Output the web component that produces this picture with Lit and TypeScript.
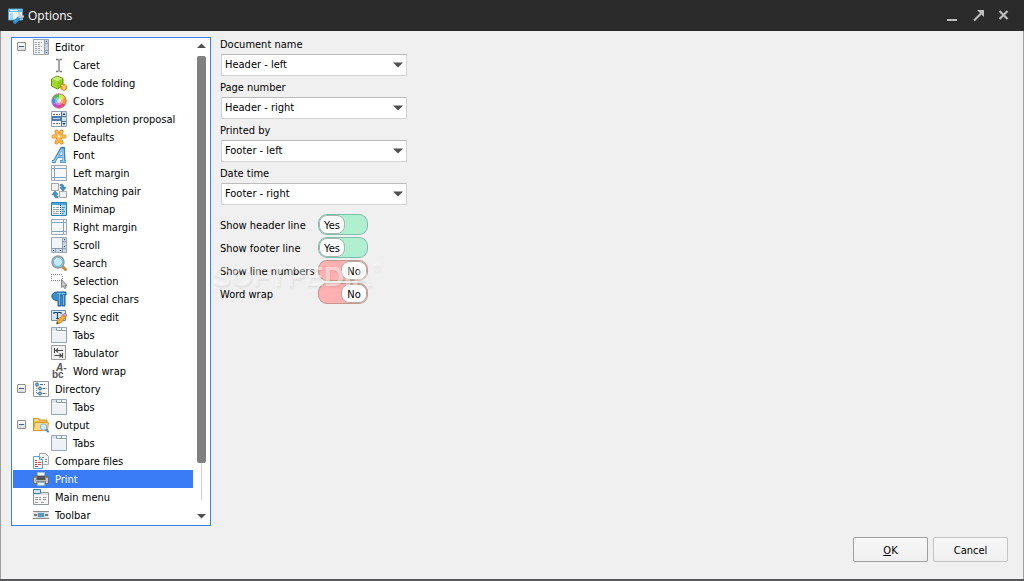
import { LitElement, html, svg, css, nothing, TemplateResult, SVGTemplateResult } from "lit";
import { customElement, state } from "lit/decorators.js";
import { classMap } from "lit/directives/class-map.js";

interface TreeNode {
  label: string;
  icon: string;
  children?: TreeNode[];
}

const tabsIcon = svg`
  <path d="M.5 .5h15v15H.5z" fill="#eef2f7" stroke="#95a4b6"/>
  <path d="M1 1h14v3H1z" fill="#dbe4ee"/>
  <path d="M5.500 1v2.500h5V1M10.500 3.500H15" fill="none" stroke="#8799ad"/>
  <path d="M6 1h4v2H6zM11 1h4v2h-4z" fill="#f7fafd"/>
  <path d="M1 4.500h14" stroke="#fff"/>`;

const icons: Record<string, SVGTemplateResult> = {
  app: svg`
    <path d="M.500 1h14v11H.5z" fill="#e6f4fc" stroke="#4aa3d8"/>
    <path d="M1 1.500h13v2.500H1z" fill="#5fb6e6"/><path d="M2 2h8v1H2z" fill="#fff"/>
    <path d="M2 5h3v6H2z" fill="#a9d8f2"/>
    <path d="M7 14l4-4" stroke="#2f94d4" stroke-width="3.500" stroke-linecap="round"/>
    <path d="M10.500 9.500l3-2M11.500 4v3l2 1.500h3" stroke="#c9ced2" stroke-width="2" fill="none"/>
    <path d="M13 9l1.500 3" stroke="#a8adb2" stroke-width="1.500"/>`,
  editor: svg`
    <path d="M.5.5h15v15H.5z" fill="#f4f5f6" stroke="#9aa5b0"/>
    <path d="M11 1h4v14h-4z" fill="#c5d3e0"/>
    <path d="M11.500 1v14M11 4.500h4M11 11.500h4" stroke="#8fa1b3"/>
    <path d="M12.500 3l1-1 1 1zM12.500 13l1 1 1-1z" fill="#34495e"/>
    <path d="M2 3.500h7M2 5.500h6M2 7.500h7M2 9.500h6M2 11.500h7M2 13.500h5" stroke="#a0a5aa" stroke-dasharray="2 1"/>`,
  caret: svg`<path d="M5 2.500h2.500M8.500 2.500H11M8 3v11M5 14.500h2.500M8.500 14.500H11" stroke="#777" stroke-width="1.300" fill="none"/>`,
  folding: svg`
    <path d="M.5 4L6 1l6 2.500v7L6.500 14 .5 11z" fill="#8cc91a" stroke="#5c9410"/>
    <path d="M1 4l5-2.500 5.500 2.200L6.500 6.500z" fill="#c8ec72"/>
    <path d="M6.500 6.500V13.500L1 11V4.200z" fill="#a3d832"/>
    <path d="M10 10l3-1 2.500 1.500v3.500L13 15.500 10 14z" fill="#f7ac32" stroke="#d98916"/>
    <path d="M10.500 10.500l2.500 1 2.500-1M13 11.500V15" stroke="#ffe0a0" fill="none"/>`,
  colors: svg`
    <path d="M8 8V1A7 7 0 0 1 14 4.500z" fill="#d8e43a"/><path d="M8 8l6-3.500A7 7 0 0 1 14 11.500z" fill="#f29a2c"/>
    <path d="M8 8l6 3.500A7 7 0 0 1 8 15z" fill="#f0436b"/><path d="M8 8v7A7 7 0 0 1 2 11.500z" fill="#b44de8"/>
    <path d="M8 8l-6 3.500A7 7 0 0 1 2 4.500z" fill="#3d8ff0"/><path d="M8 8L2 4.500A7 7 0 0 1 8 1z" fill="#3fc36b"/>
    <circle cx="8" cy="8" r="4" fill="#fff" opacity=".35"/><circle cx="8" cy="8" r="2" fill="#fff" opacity=".6"/>
    <circle cx="8" cy="8" r="7.200" fill="none" stroke="#c0504e" stroke-width=".8"/>`,
  completion: svg`
    <path d="M.5.5h15v15H.5z" fill="#fff" stroke="#8b9fb3"/>
    <path d="M1 5h9v5H1z" fill="#4d7ba8"/><path d="M2 7.500h7" stroke="#bcd6ee"/>
    <path d="M2 3.500h7M2 12.500h7" stroke="#666" stroke-dasharray="2 1"/>
    <path d="M10 1h5v14h-5z" fill="#cfdfee"/><path d="M10.500 1v14M10 5.500h5M10 10.500h5" stroke="#4f7598"/>
    <path d="M11.500 4L13 2l1.500 2zM11.500 12l1.500 2 1.500-2z" fill="#1f3f5f"/>`,
  defaults: svg`
    <g stroke="#dd8e28" stroke-width="4" stroke-linecap="round"><path d="M5.500 2.500l5 11M10.500 2.500l-5 11M2.500 7.500h11"/></g>
    <g stroke="#fcbb52" stroke-width="2.400" stroke-linecap="round"><path d="M5.500 2.500l5 11M10.500 2.500l-5 11M2.500 7.500h11"/></g>
    <circle cx="8" cy="7.500" r="1.200" fill="#fff0d0"/>`,
  font: svg`
    <path d="M1 14.500h4M9 14.500h6M3.500 14L10.500 1.500h2L13 14M6 9.500h6" fill="none" stroke="#3d82bd" stroke-width="3"/>
    <path d="M1.500 14.500h3M9.500 14.500h5M3.500 14L10.500 2.500h1.500L12.500 14M6 9.500h6" fill="none" stroke="#9ccff4" stroke-width="1.400"/>`,
  leftMargin: svg`
    <path d="M.5.5h15v15H.5z" fill="#f7f8f9" stroke="#a2abb3"/>
    <path d="M3.500 1v14M1 3.500h14M1 12.500h14" stroke="#7ea6c4"/>`,
  matching: svg`
    <path d="M.5.5h7v7h-7zM8.500 8.500h7v6h-7z" fill="#f2f2f2" stroke="#a6a6a6"/>
    <path d="M9 1.500c3-1 4 1 4 3h2L12 8 9 4.500h2c0-1-.5-2-2-1.500z" fill="#3c94cf" stroke="#286b9c" stroke-width=".6"/>
    <path d="M7 14.500c-3 1-4-1-4-3H1L4 8l3 3.500H5c0 1 .5 2 2 1.500z" fill="#3c94cf" stroke="#286b9c" stroke-width=".6"/>`,
  minimap: svg`
    <path d="M.5 1.500h15v13H.5z" fill="#fff" stroke="#2783b8"/><path d="M1 2h14v2H1z" fill="#4ba5d8"/>
    <path d="M10 4h5v10h-5z" fill="#a9dcf6"/><path d="M9.500 4v10" stroke="#345" stroke-dasharray="1 1"/>
    <path d="M2 6.500h2M5 6.500h3M2 8.500h6M2 10.500h2M5 10.500h3M2 12.500h6" stroke="#9ba3aa"/>
    <path d="M11 6.500h3M11 8.500h2M11 10.500h3M11 12.500h2" stroke="#4d91b8"/>`,
  rightMargin: svg`
    <path d="M.5.5h15v15H.5z" fill="#f7f8f9" stroke="#a2abb3"/>
    <path d="M12.500 1v14M1 3.500h14M1 12.500h14" stroke="#7ea6c4"/>`,
  scroll: svg`
    <path d="M.5.5h15v15H.5z" fill="#f2f4f6" stroke="#9aa8b5"/>
    <path d="M11 1h4v14H1v-4h10z" fill="#c8d6e3"/>
    <path d="M11.500 1v14M1 11.500h14M11 4.500h4M4.500 11v4" stroke="#8da0b3"/>
    <path d="M13 2h1v1h-1zM13 9h1v1h-1zM2 13h1v1H2zM9 13h1v1H9z" fill="#34495e"/>`,
  search: svg`
    <path d="M12 12l2.500 2.500" stroke="#c58a34" stroke-width="3" stroke-linecap="round"/>
    <circle cx="7" cy="7" r="6" fill="#a5dbf7" stroke="#8c9aa6" stroke-width="1.500"/>
    <circle cx="7" cy="7" r="4.500" fill="#c4ebfd" stroke="#68b5e2"/><path d="M4 6c.5-2 2-3 4-2.500" stroke="#fff" fill="none"/>`,
  selection: svg`
    <path d="M0 1.500h12M0 7.500h10" stroke="#777" stroke-dasharray="1 1"/>
    <path d="M.5 3v4M11.500 3v3" stroke="#777" stroke-dasharray="1 1"/>
    <path d="M10.500 6.500v8l2-1.500 1 2.500 1.500-.7-1-2.300h2z" fill="#c9c9c9" stroke="#858585"/>`,
  special: svg`
    <path d="M15 1v3h-1v11h-3V4h-1v11H7V9.500C-1 10-1 1 6 1z" fill="#3a8fcd" stroke="#1d619a"/>
    <path d="M6 2.500h8M12.500 4v10M8.500 3v11" stroke="#78bce9" fill="none"/>`,
  sync: svg`
    <path d="M.5 1.500h14v10H.5z" fill="#d8e7f5" stroke="#6f8fb0"/>
    <path d="M3 5V3.500h7V5M6.500 3.500v6M5 9.500h3" fill="none" stroke="#24486d" stroke-width="1.200"/>
    <path d="M5.500 15l1-4L12 5.500l3 3L9.500 14z" fill="#f5aa38" stroke="#b8761e" stroke-width=".8"/>
    <path d="M12 5.500l1-1c1.500-.5 3 1 2.500 2.500l-.8 1z" fill="#e9a3c4" stroke="#a0638a" stroke-width=".7"/>
    <path d="M5.500 15l.7-2 1.500 1.300z" fill="#333"/>`,
  tabs: tabsIcon,
  tabulator: svg`
    <path d="M.5 .5h14v14H.5z" fill="#f1f1f1" stroke="#9c9c9c"/>
    <path d="M3.500 3v5M4 5.500h8M7 3.500L5 5.500l2 2M11.500 8v5M3.500 10.500H11M8.500 8.500l2 2-2 2" stroke="#4a4a4a" fill="none" stroke-width="1.100"/>`,
  wrap: svg`
    <text x="5" y="8" font-size="10" font-weight="700" font-style="italic" font-family="Liberation Sans, sans-serif" fill="#555">A-</text>
    <text x="1" y="15" font-size="10" font-weight="700" font-family="Liberation Sans, sans-serif" fill="#555">bc</text>`,
  directory: svg`
    <path d="M.5.5h15v15H.5z" fill="#fafafa" stroke="#8f979f"/>
    <path d="M3.500 3v9.500H6M3.500 7.500H6" stroke="#888" fill="none" stroke-dasharray="1 1"/>
    <circle cx="4" cy="3.500" r="1.500" fill="#79bce5" stroke="#2b6d9e"/>
    <circle cx="7" cy="7.500" r="1.500" fill="#79bce5" stroke="#2b6d9e"/>
    <circle cx="7" cy="12.500" r="1.500" fill="#79bce5" stroke="#2b6d9e"/>
    <path d="M7 3.500h5M9.500 7.500H14M9.500 12.500H14" stroke="#666" stroke-dasharray="3 1"/>`,
  output: svg`
    <path d="M.5 1.500h5l1 1.500h7.500v10.500H.5z" fill="#f3bd53" stroke="#d19527"/>
    <path d="M2 5.500h13.500l-1 8H.5z" fill="#fcd987" stroke="#d89d33"/>
    <path d="M2 3h3" stroke="#fff"/>
    <path d="M13 12.500l2 2" stroke="#4d8ec4" stroke-width="2" stroke-linecap="round"/>
    <circle cx="10.500" cy="10" r="3.200" fill="#cfeafa" stroke="#82b4d6"/>`,
  compare: svg`
    <path d="M6.500.5h6l3 3v8h-9z" fill="#f6f6f6" stroke="#aaa"/>
    <path d="M9 4.500h2M12 6.500h2M12 8.500h2" stroke="#888"/>
    <path d="M.5 3.500h6l3 3v9h-9z" fill="#fff" stroke="#5aa5d6"/><path d="M6.500 3.500v3h3" fill="#cde7f7" stroke="#5aa5d6"/>
    <path d="M2 7.500h2M2 9.500h2M5 9.500h3M2 11.500h2M5 11.500h3M2 13.500h3" stroke="#e03b3b"/>`,
  print: svg`
    <path d="M4.500 1.500h7v5h-7z" fill="#edf9ff" stroke="#9dc0d4"/>
    <path d="M.5 6.500l1-1.500h13l1 1.500v6H.5z" fill="#8a8a8a" stroke="#6a6a6a"/>
    <path d="M1 7h2v5H1zM13 7h2v5h-2z" fill="#c9c9c9"/>
    <path d="M4 5h8v4H4z" fill="#555"/><path d="M2 9.500h12" stroke="#bbb"/>
    <path d="M4.500 11.500h7v3h-7z" fill="#dff5ff" stroke="#8fb8cd"/>`,
  menu: svg`
    <path d="M.5 3.500h15v12H.5z" fill="#f8f8f8" stroke="#8d969f"/><path d="M1 4h14v2H1z" fill="#dde4ea"/>
    <path d="M.5.5h7v4h-7z" fill="#cfe5f7" stroke="#4c78a6"/>
    <path d="M2 8.500h6M2 10.500h6M2 13.500h4M10 8.500h4M10 10.500h3M8 13.500h4" stroke="#9a9a9a" stroke-dasharray="3 1"/>`,
  toolbar: svg`
    <path d="M0 4h16v8H0z" fill="#e4e4e4"/>
    <path d="M4 4h8v8H4z" fill="#cbd9e4"/>
    <path d="M0 4.500h16M0 11.500h16" stroke="#8a8a8a"/>
    <path d="M1 8h3M12 8h3" stroke="#555" stroke-width="1.500"/><path d="M5 6h6v4H5z" fill="#5b96c2"/>`,
};

const tree: TreeNode[] = [
  {
    label: "Editor", icon: "editor", children: [
      { label: "Caret", icon: "caret" },
      { label: "Code folding", icon: "folding" },
      { label: "Colors", icon: "colors" },
      { label: "Completion proposal", icon: "completion" },
      { label: "Defaults", icon: "defaults" },
      { label: "Font", icon: "font" },
      { label: "Left margin", icon: "leftMargin" },
      { label: "Matching pair", icon: "matching" },
      { label: "Minimap", icon: "minimap" },
      { label: "Right margin", icon: "rightMargin" },
      { label: "Scroll", icon: "scroll" },
      { label: "Search", icon: "search" },
      { label: "Selection", icon: "selection" },
      { label: "Special chars", icon: "special" },
      { label: "Sync edit", icon: "sync" },
      { label: "Tabs", icon: "tabs" },
      { label: "Tabulator", icon: "tabulator" },
      { label: "Word wrap", icon: "wrap" },
    ],
  },
  { label: "Directory", icon: "directory", children: [{ label: "Tabs", icon: "tabs" }] },
  { label: "Output", icon: "output", children: [{ label: "Tabs", icon: "tabs" }] },
  { label: "Compare files", icon: "compare" },
  { label: "Print", icon: "print" },
  { label: "Main menu", icon: "menu" },
  { label: "Toolbar", icon: "toolbar" },
];

const positions = ["Header - left", "Header - right", "Footer - left", "Footer - right"];
const fields = ["Document name", "Page number", "Printed by", "Date time"];

const icon = (name: string) =>
  html`<svg class="icon" viewBox="0 0 16 16" fill="none" aria-hidden="true">${icons[name]}</svg>`;

@customElement("options-tree")
export class OptionsTree extends LitElement {
  @state() private selected = "Print";
  @state() private closed: string[] = [];

  static styles = css`
    :host {
      display: flex;
      box-sizing: border-box;
      min-height: 0;
      padding: 0 4px 0 1px;
      background: #fff;
      border: 1px solid #3b7ff5;
      overflow: hidden;
    }
    ul { margin: 0; padding: 0; list-style: none; }
    .list { flex: 1; min-width: 0; overflow: hidden; }
    .row { display: flex; align-items: center; height: 18px; padding-left: 20px; }
    .row.branch { padding-left: 4px; }
    .row.child { padding-left: 38px; }
    .row.selected { background: #3a7cf6; color: #fff; }
    .icon { flex: none; width: 16px; height: 16px; }
    .item {
      flex: 1;
      padding: 2px 0 0 6px;
      border: 0;
      background: none;
      color: inherit;
      font: inherit;
      text-align: left;
      white-space: nowrap;
      outline: none;
    }
    .toggle {
      flex: none;
      display: flex;
      width: 9px;
      height: 9px;
      margin: 0 7px 1px 0;
      padding: 0;
      border: 1px solid #8e8f8f;
      border-radius: 1px;
      background: linear-gradient(#fff, #dcdcdc);
    }
    .sign { width: 7px; height: 7px; }
    .bar { flex: none; display: flex; flex-direction: column; align-items: center; width: 9px; margin-left: 4px; }
    .arrow { display: flex; flex: none; width: 9px; height: 18px; padding: 0; border: 0; background: none; }
    .arrow svg { width: 9px; height: 18px; }
    .track { flex: 1; display: flex; flex-direction: column; align-items: center; width: 9px; margin-bottom: 7px; }
    .thumb { flex: 11; width: 9px; border-radius: 2px; background: #808080; }
    .rest { flex: 1; width: 1px; background: #d0d0d0; }
  `;

  private flip(label: string) {
    this.closed = this.closed.includes(label)
      ? this.closed.filter((l) => l !== label)
      : [...this.closed, label];
  }

  private node(n: TreeNode, parent = ""): TemplateResult {
    const key = parent + n.label;
    const open = !this.closed.includes(key);
    const on = this.selected === key;
    return html`<li role="treeitem" aria-selected=${on}>
      <div class=${classMap({ row: true, branch: !!n.children, child: !!parent, selected: on })}>
        ${n.children
          ? html`<button class="toggle" aria-label="Toggle ${n.label}" @click=${() => this.flip(key)}>
              <svg class="sign" viewBox="0 0 7 7"><path d=${open ? "M1 3.5h5" : "M1 3.5h5M3.5 1v5"} stroke="#3b5fb5" /></svg>
            </button>`
          : nothing}
        ${icon(n.icon)}
        <button class="item" @click=${() => (this.selected = key)}>${n.label}</button>
      </div>
      ${n.children && open
        ? html`<ul role="group">${n.children.map((c) => this.node(c, key + "/"))}</ul>`
        : nothing}
    </li>`;
  }

  render() {
    return html`
      <ul class="list" role="tree">${tree.map((n) => this.node(n))}</ul>
      <div class="bar">
        <button class="arrow" aria-label="Scroll up"><svg viewBox="0 0 9 18"><path d="M0 10l4.500-4.500L9 10z" fill="#505050" /></svg></button>
        <div class="track"><div class="thumb"></div><div class="rest"></div></div>
        <button class="arrow" aria-label="Scroll down"><svg viewBox="0 0 9 18"><path d="M0 7l4.500 4.500L9 7z" fill="#505050" /></svg></button>
      </div>`;
  }
}

@customElement("app-root")
export class AppRoot extends LitElement {
  @state() private switches = [
    { label: "Show header line", on: true },
    { label: "Show footer line", on: true },
    { label: "Show line numbers", on: false },
    { label: "Word wrap", on: false },
  ];

  static styles = css`
    :host {
      display: flex;
      flex-direction: column;
      box-sizing: border-box;
      height: 100vh;
      background: #f0f0f0;
      border-bottom: 2px solid #58585a;
      color: #000;
      font: 11px/14px "DejaVu Sans Condensed", Tahoma, sans-serif;
    }
    .title {
      flex: none;
      display: flex;
      align-items: center;
      gap: 4px;
      height: 31px;
      padding: 0 2px 0 8px;
      background: #2b2b2b;
      color: #fff;
    }
    .icon { width: 16px; height: 16px; }
    h1 { flex: 1; margin: 0; font: 12px/16px "Open Sans", sans-serif; }
    .window { display: flex; width: 24px; height: 24px; padding: 0; border: 0; background: none; }
    .window svg { width: 24px; height: 24px; }
    .body {
      flex: 1;
      display: flex;
      flex-direction: column;
      min-height: 0;
      padding: 6px 15px 17px 10px;
      border: solid #a0a0a0;
      border-width: 0 1px;
    }
    .content { flex: 1; display: flex; gap: 9px; min-height: 0; }
    options-tree { flex: none; width: 200px; }
    .page { flex: 1; min-width: 0; }
    .field { display: flex; flex-direction: column; gap: 1px; margin-bottom: 4px; line-height: 16px; }
    .box { display: grid; width: 186px; margin-left: 1px; }
    .box > * { grid-area: 1 / 1; }
    select {
      appearance: none;
      box-sizing: border-box;
      height: 22px;
      padding: 0 24px 0 3px;
      border: 1px solid #d4d4d4;
      border-top-color: #bcbcbc;
      border-radius: 1px;
      background: #fff;
      color: #000;
      font: inherit;
    }
    .drop { justify-self: end; align-self: center; width: 10px; height: 6px; margin-right: 4px; pointer-events: none; }
    .switches { display: grid; gap: 2px; margin-top: 9px; }
    .switch { display: grid; grid-template-columns: 98px 50px; align-items: center; height: 21px; }
    .caption { padding-top: 2px; }
    .knobs { display: grid; }
    .knobs > * { grid-area: 1 / 1; }
    input {
      appearance: none;
      box-sizing: border-box;
      width: 50px;
      height: 21px;
      margin: 0;
      border: 1px solid #c09a8c;
      border-radius: 9px;
      background: #ffb0b0;
    }
    input:checked { border-color: #7fbfae; background: #b0f0d0; }
    .knob {
      justify-self: end;
      box-sizing: border-box;
      width: 26px;
      height: 19px;
      margin: 1px;
      border: 1px solid #b9a9a4;
      border-radius: 8px;
      background: #fff;
      line-height: 19px;
      text-align: center;
      pointer-events: none;
    }
    input:checked + .knob { justify-self: start; border-color: #a3b5ae; }
    .buttons { display: flex; justify-content: flex-end; gap: 5px; margin-top: 11px; }
    .button {
      width: 75px;
      height: 25px;
      padding: 2px 0 0;
      border: 1px solid #c4c4c4;
      border-radius: 2px;
      background: linear-gradient(#f9f9f9, #efefef);
      color: #000;
      font: inherit;
    }
    .button.primary { border-color: #a0a0a0; }
    .watermark {
      position: absolute;
      top: 260px;
      left: 212px;
      display: flex;
      color: rgba(255, 255, 255, 0.45);
      font: bold 28px/34px "Liberation Sans", sans-serif;
      text-shadow: 1px 2px 2px rgba(0, 0, 0, 0.06);
      pointer-events: none;
    }
    .mark { font-size: 11px; line-height: 14px; }
  `;

  private setSwitch(i: number, e: Event) {
    const on = (e.target as HTMLInputElement).checked;
    this.switches = this.switches.map((s, j) => (j === i ? { ...s, on } : s));
  }

  render() {
    return html`
      <header class="title">
        ${icon("app")}
        <h1>Options</h1>
        <button class="window" aria-label="Minimize"><svg viewBox="0 0 24 24"><path d="M5 16h10" stroke="#bdbdbd" stroke-width="2" /></svg></button>
        <button class="window" aria-label="Maximize"><svg viewBox="0 0 24 24"><path d="M4 16.500l7-7" stroke="#bdbdbd" stroke-width="2.200" /><path d="M7 6h7v7z" fill="#bdbdbd" /></svg></button>
        <button class="window" aria-label="Close"><svg viewBox="0 0 24 24"><path d="M1.500 7l8 8M9.500 7l-8 8" stroke="#bdbdbd" stroke-width="2.200" /></svg></button>
      </header>
      <div class="body">
        <div class="content">
          <options-tree></options-tree>
          <main class="page">
            ${fields.map((label, i) => html`
              <div class="field">
                <label for="field-${i}">${label}</label>
                <div class="box">
                  <select id="field-${i}">
                    ${positions.map((p, j) => html`<option ?selected=${i === j}>${p}</option>`)}
                  </select>
                  <svg class="drop" viewBox="0 0 10 6" aria-hidden="true"><path d="M0 .5h10l-5 5z" fill="#505050" /></svg>
                </div>
              </div>`)}
            <div class="switches">
              ${this.switches.map((s, i) => html`
                <label class="switch">
                  <span class="caption">${s.label}</span>
                  <span class="knobs">
                    <input type="checkbox" role="switch" .checked=${s.on} @change=${(e: Event) => this.setSwitch(i, e)} />
                    <span class="knob">${s.on ? "Yes" : "No"}</span>
                  </span>
                </label>`)}
            </div>
          </main>
        </div>
        <footer class="buttons">
          <button class="button primary"><u>O</u>K</button>
          <button class="button">Cancel</button>
        </footer>
      </div>
      <div class="watermark" aria-hidden="true">SOFTPEDIA<span class="mark">®</span></div>`;
  }
}
